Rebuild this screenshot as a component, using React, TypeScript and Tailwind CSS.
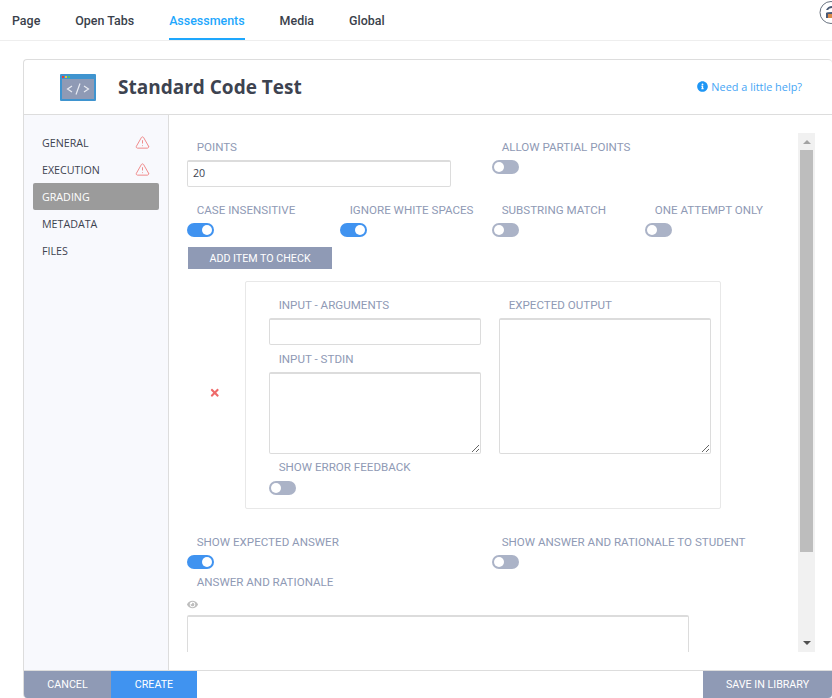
import { FaEye, FaInfoCircle, FaTimes } from "react-icons/fa";
import { TriangleAlert } from "lucide-react";

const tabs = ["Page", "Open Tabs", "Assessments", "Media", "Global"];

const sideItems = [
    { name: "GENERAL", warn: true },
    { name: "EXECUTION", warn: true },
    { name: "GRADING", active: true },
    { name: "METADATA" },
    { name: "FILES" },
];

const Label = ({ text, className = "" }: { text: string; className?: string }) => (
    <div className={`h-[14px] pl-[9.7px] text-[11.6px] leading-[14px] whitespace-nowrap text-[#8f9ab5] ${className}`}>{text}</div>
);

const Toggle = ({ on = false }: { on?: boolean }) => (
    <div className={`flex h-[14px] w-[27px] items-center rounded-full px-[2px] ${on ? "justify-end bg-[#4093f0]" : "justify-start bg-[#abb3c7]"}`}>
        <div className="h-[10px] w-[10px] rounded-full bg-white" />
    </div>
);

const ToggleField = ({ label, on }: { label: string; on?: boolean }) => (
    <div>
        <Label text={label} className="mb-[6px]" />
        <Toggle on={on} />
    </div>
);

const fieldClass = "block rounded-[2px] border border-[#dcdcdc] border-t-2 bg-white outline-none";

const CodeIcon = () => (
    <svg width="36" height="27" viewBox="0 0 36 27">
        <rect width="36" height="27" rx="1" fill="#3f94cf" />
        <rect x="2" y="5" width="32" height="20" fill="#8f9ab5" />
        <rect x="2" y="2" width="2" height="2" fill="#e0413a" />
        <rect x="5" y="2" width="2" height="2" fill="#e8c33a" />
        <rect x="8" y="2" width="2" height="2" fill="#52c25a" />
        <path d="M12 12l-4.5 3 4.5 3M24 12l4.5 3-4.5 3M20 9.5l-4 11" fill="none" stroke="#e8ebf2" strokeWidth="1.2" />
    </svg>
);

const Avatar = () => (
    <svg className="absolute top-px left-[819px]" width="13" height="23" viewBox="0 0 13 23">
        <circle cx="12" cy="11.5" r="11" fill="#fff" stroke="#68727f" strokeWidth="1" />
        <path d="M7 9q2-4 6-4v2q-3 0-4 2zM7 12q1-1 6-1v2H9v4H7z" fill="#4a5a75" />
        <path d="M9 13h4v4H9z" fill="#d98b4a" />
    </svg>
);

const Scrollbar = () => (
    <div className="flex h-[519px] w-[17px] flex-none flex-col items-center bg-[#f1f1f1]">
        <div className="flex h-[17px] flex-none items-center justify-center">
            <div className="h-0 w-0 border-x-[4px] border-b-[4px] border-x-transparent border-b-[#a3a3a3]" />
        </div>
        <div className="h-[402px] w-[13px] flex-none bg-[#bdbdbd]" />
        <div className="flex flex-1 items-end justify-center pb-[7px]">
            <div className="h-0 w-0 border-x-[4px] border-t-[4px] border-x-transparent border-t-[#505050]" />
        </div>
    </div>
);

const App = () => {
    return (
        <div className="relative h-[698px] w-[832px] overflow-hidden bg-white font-['Roboto',sans-serif]">
            <div className="flex h-[41px] gap-[35px] border-b border-[#eeeeee] pl-[12px]">
                {tabs.map((tab) => (
                    <div
                        key={tab}
                        className={`h-[40px] pt-[12px] text-[12.45px] leading-[17px] font-medium ${tab === "Assessments" ? "border-b-2 border-[#1ea7fd] text-[#1ea7fd]" : "text-[#3a3f4b]"}`}
                    >
                        {tab}
                    </div>
                ))}
            </div>
            <Avatar />

            <div className="mt-[18px] ml-[23px] flex h-[639px] w-[809px] flex-col overflow-hidden rounded-[4px] border-t border-l border-[#dddddd]">
                <div className="flex h-[55px] flex-none items-center border-b border-[#dddddd] pr-[30px] pl-[36px]">
                    <CodeIcon />
                    <div className="ml-[22px] font-['Open_Sans',sans-serif] text-[19px] font-bold text-[#3d4350]">Standard Code Test</div>
                    <div className="ml-auto flex items-center gap-[3px] font-['Open_Sans',sans-serif] text-[10.9px] text-[#45a5f5]">
                        <FaInfoCircle className="text-[11px] text-[#1e96f5]" />
                        Need a little help?
                    </div>
                </div>

                <div className="flex min-h-0 flex-1">
                    <div className="w-[145px] flex-none border-r border-[#dddddd] bg-[#f8f9fd] pt-[14px] pl-[9px]">
                        {sideItems.map((item) => (
                            <div
                                key={item.name}
                                className={`flex h-[27px] w-[126px] items-center justify-between rounded-[2px] px-[9px] pt-[2px] font-['Open_Sans',sans-serif] text-[10.7px] ${item.active ? "bg-[#9b9b9b] text-white" : "text-[#3d4350]"}`}
                            >
                                {item.name}
                                {item.warn && <TriangleAlert size={15} strokeWidth={1.4} className="-mt-[2px] text-[#ee7b7b]" />}
                            </div>
                        ))}
                    </div>

                    <div className="flex h-[555px] min-w-0 flex-1 pt-[18px] pl-[18px]">
                        <div className="h-[519px] w-[611px] flex-none overflow-hidden pt-[7px]">
                            <div className="grid grid-cols-[305px_1fr]">
                                <div>
                                    <Label text="POINTS" className="mb-[6px]" />
                                    <input
                                        readOnly
                                        value="20"
                                        className={`${fieldClass} h-[27px] w-[264px] px-[5px] pb-[2px] font-['Open_Sans',sans-serif] text-[10.7px] text-[#3d4350]`}
                                    />
                                </div>
                                <ToggleField label="ALLOW PARTIAL POINTS" />
                            </div>

                            <div className="mt-[16px] grid grid-cols-[153px_152px_153px_153px]">
                                <ToggleField label="CASE INSENSITIVE" on />
                                <ToggleField label="IGNORE WHITE SPACES" on />
                                <ToggleField label="SUBSTRING MATCH" />
                                <ToggleField label="ONE ATTEMPT ONLY" />
                            </div>

                            <button className="mt-[10px] ml-px block h-[22px] w-[144px] bg-[#8f9ab5] pt-[2px] text-[10.7px] text-white">ADD ITEM TO CHECK</button>

                            <div className="mt-[12px] flex items-center">
                                <div className="-mt-[4px] w-[58px] flex-none pl-[22px] text-[11.5px] text-[#ee6a6a]">
                                    <FaTimes />
                                </div>
                                <div className="h-[228px] w-[476px] rounded-[2px] border border-[#e8e8e8] pt-[16px] pl-[23px]">
                                    <div className="grid grid-cols-[212px_212px] gap-x-[18px]">
                                        <div>
                                            <Label text="INPUT - ARGUMENTS" className="mb-[6px]" />
                                            <input readOnly className={`${fieldClass} h-[27px] w-[212px]`} />
                                            <Label text="INPUT - STDIN" className="mt-[7px] mb-[6px]" />
                                            <textarea readOnly className={`${fieldClass} h-[82px] w-[212px]`} />
                                            <Label text="SHOW ERROR FEEDBACK" className="mt-[6px] mb-[7px]" />
                                            <Toggle />
                                        </div>
                                        <div>
                                            <Label text="EXPECTED OUTPUT" className="mb-[6px]" />
                                            <textarea readOnly className={`${fieldClass} h-[136px] w-[212px]`} />
                                        </div>
                                    </div>
                                </div>
                            </div>

                            <div className="mt-[26px] grid grid-cols-[305px_1fr]">
                                <ToggleField label="SHOW EXPECTED ANSWER" on />
                                <ToggleField label="SHOW ANSWER AND RATIONALE TO STUDENT" />
                            </div>
                            <Label text="ANSWER AND RATIONALE" className="mt-[6px]" />
                            <FaEye className="mt-[10px] text-[11px] text-[#bdbdbd]" />
                            <div className={`${fieldClass} mt-[5px] h-[80px] w-[502px]`} />
                        </div>
                        <Scrollbar />
                    </div>
                </div>

                <div className="flex h-[28px] flex-none border-t border-[#dddddd] text-[10.7px] text-white">
                    <button className="w-[87px] bg-[#8f9ab5] pt-[2px]">CANCEL</button>
                    <button className="w-[86px] bg-[#4093f0] pt-[2px]">CREATE</button>
                    <button className="ml-auto w-[129px] bg-[#8f9ab5] pt-[2px]">SAVE IN LIBRARY</button>
                </div>
            </div>
        </div>
    );
};

export default App;
